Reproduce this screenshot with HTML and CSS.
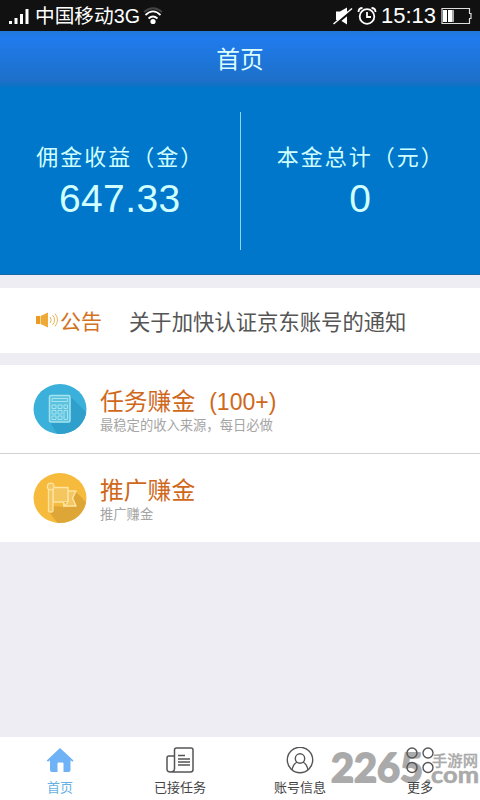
FILE: index.html
```html
<!DOCTYPE html>
<html lang="zh-CN">
<head>
<meta charset="utf-8">
<title>首页</title>
<link rel="stylesheet" href="styles.css">
</head>
<body>
<div class="app">
  <div class="status">
    <svg class="signal" width="22" height="18" viewBox="0 0 22 18" fill="#fff"><rect x="1" y="14" width="3" height="3"/><rect x="6.500" y="11" width="3" height="6"/><rect x="12" y="7" width="3" height="10"/><rect x="17.500" y="2" width="3" height="15"/></svg>
    <span class="carrier">中国移动3G</span>
    <svg class="wifi" width="20" height="18" viewBox="0 0 20 18" fill="none" stroke="#fff" stroke-width="1.8"><path d="M1 5Q10-2.500 19 5" stroke="#444"/><path d="M2.500 8Q10 .8 17.500 8"/><path d="M5.500 11.500Q10 7.500 14.500 11.500"/><circle cx="10" cy="14.500" r="2.600" fill="#fff" stroke="none"/></svg>
    <span class="spacer"></span>
    <svg class="mute" width="20" height="18" viewBox="0 0 20 18"><path d="M3 4.500h4l7-4v17L7 13H3z" fill="#fff"/><path d="M1 18.500 19.500 3" stroke="#111" stroke-width="2.500"/><path d="M.5 17 19 1.500" stroke="#fff" stroke-width="1.500"/></svg>
    <svg class="alarm" width="20" height="18" viewBox="0 0 20 18" fill="none" stroke="#fff" stroke-width="1.800"><circle cx="10" cy="9.500" r="7.300"/><path d="M10 5v5h4M1.500 5Q1.500 1 5.500 1M18.500 5Q18.500 1 14.500 1"/></svg>
    <span class="clock">15:13</span>
    <svg class="battery" width="31" height="18" viewBox="0 0 31 18"><path d="M1 1.500h27.500v5h1.500v5h-1.500v5H1z" fill="none" stroke="#ddd" stroke-width="1.200"/><path d="M2 3h4v12H2zM7 3h4v12H7z" fill="#fff"/><path d="M11 3h2v12h-2z" fill="#aaa"/></svg>
  </div>
  <header class="title">首页</header>
  <section class="summary">
    <div class="stat"><div class="label">佣金收益（金）</div><div class="value">647.33</div></div>
    <div class="divider"></div>
    <div class="stat"><div class="label">本金总计（元）</div><div class="value">0</div></div>
  </section>
  <section class="notice">
    <svg width="24" height="18" viewBox="0 0 24 18"><path d="M1 5h4v8H1z" fill="#e99b22"/><path d="M5.500 5 13 1.500v15L5.500 13z" fill="#efa936"/><path d="M15 6q2.500 3 0 6M17.500 4q4 5 0 10M20 2.500q5 6.500 0 13" fill="none" stroke="#e9b75d"/></svg>
    <span class="tag">公告</span>
    <span class="news">关于加快认证京东账号的通知</span>
  </section>
  <section class="list">
    <div class="item">
      <svg class="round" width="56" height="52" viewBox="0 0 56 52">
        <defs><clipPath id="c"><ellipse cx="28" cy="26" rx="26.500" ry="25"/></clipPath></defs>
        <ellipse cx="28" cy="26" rx="26.500" ry="25" fill="#3bb0da"/>
        <path d="M38 13 66 41V70H36L18 39z" fill="#2fa0cc" clip-path="url(#c)"/>
        <rect x="17.500" y="12.500" width="20.500" height="26.500" rx="1.500" fill="#5bc2df" stroke="#a6e3ee" stroke-width="1.500"/>
        <g fill="none" stroke="#a6e3ee"><path d="M20 15.500h15.500v3H20z"/><path d="M20 22h4v3.500h-4zM26 22h4v3.500h-4zM32 22h3.500v3.500H32zM20 27.500h4V31h-4zM26 27.500h4V31h-4zM20 33h4v3.500h-4zM26 33h4v3.500h-4zM32 27.500h3.500v9H32z"/></g>
      </svg>
      <div class="copy"><div class="name">任务赚金<span class="count">(100+)</span></div><div class="desc">最稳定的收入来源，每日必做</div></div>
    </div>
    <div class="item">
      <svg class="round" width="56" height="52" viewBox="0 0 56 52">
        <defs><clipPath id="f"><ellipse cx="28" cy="26" rx="26.500" ry="25"/></clipPath></defs>
        <ellipse cx="28" cy="26" rx="26.500" ry="25" fill="#f6bb3d"/>
        <path d="M42 18 66 42V70H40L17 40 20 34 37 35z" fill="#dda637" clip-path="url(#f)"/>
        <path d="M32 19h12l-3.500 7 3.500 8H32z" fill="#f3c660" stroke="#ffe3a0" stroke-width="1.500" stroke-linejoin="round"/>
        <path d="M21 15.500h15V30H21z" fill="#f3c660" stroke="#ffe3a0" stroke-width="1.500" stroke-linejoin="round"/>
        <path d="M36 30l-4 4v-4" fill="#e3a93c" stroke="#ffe3a0" stroke-width="1.200"/>
        <rect x="16.500" y="16" width="4.500" height="24" rx="1.500" fill="#f3c660" stroke="#ffe3a0" stroke-width="1.300"/>
        <circle cx="18.700" cy="14.500" r="3.300" fill="#f3c660" stroke="#ffe3a0" stroke-width="1.300"/>
      </svg>
      <div class="copy"><div class="name">推广赚金</div><div class="desc">推广赚金</div></div>
    </div>
  </section>
  <nav class="tabs">
    <svg class="mark" width="152" height="40" viewBox="0 0 152 40"><text class="digits" x="3" y="34" textLength="92" lengthAdjust="spacingAndGlyphs">2265</text><text class="site" x="104" y="18" textLength="46" lengthAdjust="spacingAndGlyphs">手游网</text><text class="com" x="97" y="35" textLength="54" lengthAdjust="spacingAndGlyphs">.com</text></svg>
    <div class="tab active"><svg width="28" height="28" viewBox="0 0 28 28"><path d="M14 1 27.500 13.500l-1 1.300-2-1.500V23q0 2-2 2h-5v-8.500q0-1-1-1h-4q-1 0-1 1V25H6q-2 0-2-2v-9.700l-2 1.500-1.300-1.300z" fill="#6fb2f5"/></svg><span>首页</span></div>
    <div class="tab"><svg width="28" height="28" viewBox="0 0 28 28" fill="none" stroke="#555" stroke-width="1.500"><path d="M8.500 22V3q0-2 2-2H25q2 0 2 2V22.500q0 2.500-2.500 2.500h-20Q1 25 1 22V11q0-2 2-2h5.500M8.500 21.500q0 3.500-4 3.500M12 8.500h7M12 12h12M12 15h12M12 18h12"/></svg><span>已接任务</span></div>
    <div class="tab"><svg width="28" height="28" viewBox="0 0 28 28" fill="none" stroke="#555" stroke-width="1.400"><circle cx="14" cy="13" r="12.700"/><circle cx="14" cy="11.500" r="4.700"/><path d="M6 23Q7 17.500 11 15M22 23Q21 17.500 17 15"/></svg><span>账号信息</span></div>
    <div class="tab"><svg width="28" height="28" viewBox="0 0 28 28" fill="none" stroke="#555" stroke-width="1.400"><circle cx="6" cy="6" r="5"/><circle cx="22" cy="6" r="5"/><circle cx="6" cy="20.500" r="5"/><circle cx="22" cy="20.500" r="5"/></svg><span>更多</span></div>
  </nav>
</div>
</body>
</html>
```
FILE: styles.css
```css
* { box-sizing: border-box; }
body { margin: 0; font-family: "Liberation Sans", "Noto Sans CJK SC", sans-serif; }
svg { display: block; flex: none; }
.app { width: 480px; height: 800px; display: flex; flex-direction: column; background: #eeedf3; overflow: hidden; white-space: nowrap; }
.status { height: 31px; flex: none; display: flex; align-items: center; padding: 1px 8px 0; background: #111; color: #fff; }
.carrier { font-size: 19.7px; line-height: 30px; margin-left: 5px; width: 108px; }
.spacer { flex: 1; }
.alarm { margin-left: 4px; }
.clock { font-size: 22px; line-height: 30px; margin-left: 4px; width: 56px; }
.battery { margin-left: 4px; }
.title { height: 56px; flex: none; background: linear-gradient(#2078d8, #207bed 12%, #1d70c8 90%, #0873c4); color: #dcffff; font-size: 23.7px; line-height: 59px; text-align: center; }
.summary { height: 188px; flex: none; display: flex; background: #0077ca; border-bottom: 1px solid #1768a8; color: #d0ffff; }
.stat { flex: 1; text-align: center; padding-top: 55px; }
.divider { width: 1px; height: 138px; margin-top: 25px; background: #8cd8f5; }
.label { font-size: 22px; letter-spacing: 2px; line-height: 32px; padding-left: 1px; }
.value { font-size: 39px; line-height: 50px; letter-spacing: 0.4px; }
.notice { height: 65px; flex: none; margin: 13px 0 12px; padding: 0 0 1px 35px; display: flex; align-items: center; background: #fff; }
.tag { color: #d27222; font-size: 21px; margin-left: 1px; width: 69px; }
.news { color: #555; font-size: 21.35px; }
.item { height: 88px; display: flex; padding: 18px 0 0 32px; background: #fff; }
.item + .item { height: 89px; border-top: 1px solid #d2d2d4; }
.copy { margin-left: 12px; padding-top: 1px; }
.name { color: #cf681b; font-size: 23.8px; line-height: 36px; }
.count { margin-left: 14px; font-size: 23px; }
.desc { color: #a5a5a5; font-size: 13.3px; line-height: 18px; margin-top: -3px; }
.tabs { position: relative; height: 63px; margin-top: auto; flex: none; display: flex; background: #fff; }
.tab { position: relative; flex: 1; display: flex; flex-direction: column; align-items: center; padding-top: 10px; font-size: 13px; line-height: 20px; color: #444; }
.tab span { margin-top: 3px; }
.active { color: #68b0e4; }
.mark { position: absolute; left: 328px; top: 11px; fill: #aaa; stroke: #aaa; stroke-linejoin: round; overflow: visible; }
.digits { font: bold 41px Lato, sans-serif; stroke-width: 2px; }
.site { font: 500 15px "Noto Sans CJK SC", sans-serif; stroke-width: 0.3px; }
.com { font: bold 23px Lato, sans-serif; stroke-width: 0.6px; }
```
